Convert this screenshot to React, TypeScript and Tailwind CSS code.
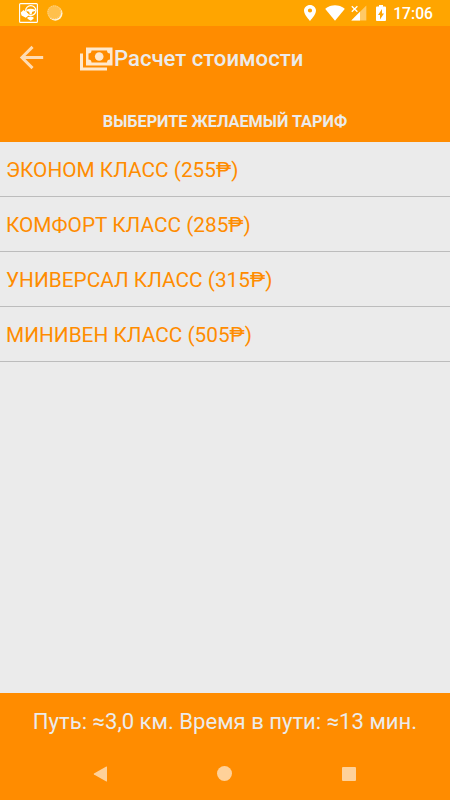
import React from 'react';

const tariffs = [
  { name: 'ЭКОНОМ КЛАСС', price: 255 },
  { name: 'КОМФОРТ КЛАСС', price: 285 },
  { name: 'УНИВЕРСАЛ КЛАСС', price: 315 },
  { name: 'МИНИВЕН КЛАСС', price: 505 },
];

const StatusBar = () => {
  return (
    <div className="flex h-[26px] items-center justify-between bg-[#ffa500] pl-[19px] pr-[17px] text-white">
      <div className="flex items-center gap-[9px]">
        {/* Taxi driver app */}
        <svg viewBox="0 0 19 20" className="h-5 w-[19px]">
          <rect x="0.6" y="0.6" width="17.8" height="18.8" rx="1" fill="none" stroke="#fff" strokeWidth="1.1" />
          <ellipse cx="11.8" cy="7.6" rx="5.1" ry="4.9" fill="none" stroke="#fff" strokeWidth="1.3" />
          <path d="M7.500 6.800q4.300-2 8.600 0v1.200l-2.800.8-.8 2.500h-1.600l-.8-2.500-2.600-.8z" fill="#fff" />
          <path d="M1.800 9.500L4.500 7l4 3.200 1 2.300-2.700 2.300-4.300-2.300z" fill="#fff" />
          <path d="M8.500 14.300l3.200-.8 2.800.8v1.500l-2.700 2-3.300-2z" fill="#fff" />
        </svg>
        <svg viewBox="0 0 16 16" className="h-4 w-4">
          <circle cx="8.3" cy="8.5" r="7.2" fill="#fff3dc" />
          <circle cx="7.3" cy="7.3" r="7" fill="#ffc04d" />
          <circle cx="7.3" cy="7.3" r="6.4" fill="none" stroke="#ffd68a" strokeWidth="1" strokeDasharray="1 1" />
        </svg>
      </div>
      <div className="flex items-center">
        <svg viewBox="5 2 14 20" className="h-4 w-3 fill-current" preserveAspectRatio="none">
          <path d="M12 2C8.13 2 5 5.13 5 9c0 5.25 7 13 7 13s7-7.75 7-13c0-3.87-3.13-7-7-7zm0 9.500a2.500 2.500 0 0 1 0-5 2.500 2.500 0 0 1 0 5z" />
        </svg>
        <svg viewBox="0 0 20 16" className="ml-[9px] h-4 w-5 fill-current">
          <path d="M10 15.800L.3 3.900C.6 3.600 4.100.3 10 .3s9.400 3.300 9.700 3.600z" />
        </svg>
        <svg viewBox="0 0 16 16" className="ml-1.5 h-4 w-4">
          <path d="M15.300.5v15H.3z" fill="#ffc966" />
          <path d="M9 6.800v8.700H.3z" fill="#fff" />
          <path d="M0 0h7.500v7.500H0z" fill="#ffa500" />
          <path d="M.8 1.200l5.600 5.600M6.400 1.200L.8 6.800" stroke="#fff" strokeWidth="1.300" fill="none" />
        </svg>
        <svg viewBox="7 2 10 20" className="ml-[9px] h-4 w-[10px] fill-current" preserveAspectRatio="none">
          <path d="M15.670 4H14V2h-4v2H8.330C7.600 4 7 4.600 7 5.330v15.330C7 21.400 7.600 22 8.330 22h7.330c.74 0 1.340-.6 1.340-1.330V5.330C17 4.600 16.400 4 15.670 4zM11 20v-5.500H9L13 7v5.500h2L11 20z" />
        </svg>
        <span className="ml-[7px] pt-px text-[15.7px] leading-5 font-medium">17:06</span>
      </div>
    </div>
  );
};

const Header = () => {
  return (
    <header className="h-[116px] bg-[#ff8c00] text-[#ebebeb]">
      <div className="flex h-16 items-center pl-[14px]">
        <button type="button" aria-label="Назад" className="-mt-0.5">
          <svg viewBox="0 0 24 24" className="h-[35px] w-[35px] fill-[#ffdcb2]">
            <path d="M20 11H7.830l5.590-5.590L12 4l-8 8 8 8 1.410-1.410L7.830 13H20v-2z" />
          </svg>
        </button>
        <svg viewBox="0 0 33 24" className="mt-0.5 ml-[31px] h-6 w-[33px] fill-[#ffe8cc]">
          <path d="M0 6.500h3v14h24v3H0z" />
          <path
            fillRule="evenodd"
            d="M6 .5h26.500v18H6zM11.500 3.500a3 3 0 0 1-3 3v6a3 3 0 0 1 3 3h15.500a3 3 0 0 1 3-3v-6a3 3 0 0 1-3-3z"
          />
          <circle cx="19.200" cy="9.500" r="4.300" />
        </svg>
        <h1 className="ml-px text-[22.1px] leading-7 font-medium whitespace-nowrap">Расчет стоимости</h1>
      </div>
      <p className="pt-5 text-center text-[16.25px] leading-6 font-bold">ВЫБЕРИТЕ ЖЕЛАЕМЫЙ ТАРИФ</p>
    </header>
  );
};

const Footer = () => {
  return (
    <footer className="h-[107px] bg-[#ff8c00]">
      <p className="flex h-14 items-center justify-center pt-0.5 text-[22.1px] whitespace-nowrap text-[#ebebeb]">
        Путь: ≈3,0 км. Время в пути: ≈13 мин.
      </p>
      {/* Android navigation */}
      <div className="flex h-[51px] items-center justify-between pb-0.5 pl-[93px] pr-[94px]">
        <svg viewBox="0 0 14 16" className="h-4 w-3.5 fill-[#ffd199]">
          <path d="M13.300.5c.5-.2.7.1.7.5v14c0 .5-.3.700-.7.500L1 8.500q-.8-.5 0-1z" />
        </svg>
        <div className="h-[15px] w-[15px] rounded-full bg-[#ffd199]"></div>
        <div className="h-3.5 w-3.5 rounded-[1px] bg-[#ffd199]"></div>
      </div>
    </footer>
  );
};

const App = () => {
  return (
    <div className="flex h-[800px] w-[450px] flex-col overflow-hidden bg-[#ebebeb] font-['Roboto',sans-serif]">
      <StatusBar />
      <Header />
      <ul className="flex-1">
        {tariffs.map((tariff) => (
          <li
            key={tariff.name}
            className="flex h-[55px] items-center border-b border-[#bcbcbc] pt-1 pl-[6px] text-[20.8px] whitespace-nowrap text-[#ff8c00]"
          >
            {tariff.name} ({tariff.price}₱)
          </li>
        ))}
      </ul>
      <Footer />
    </div>
  );
};

export default App;
